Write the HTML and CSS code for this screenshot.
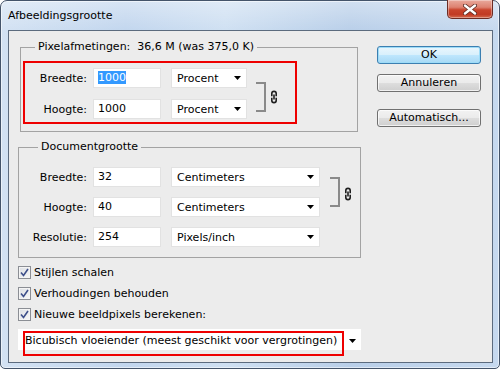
FILE: index.html
```html
<!DOCTYPE html>
<html>
<head>
<meta charset="utf-8">
<link rel="stylesheet" href="styles.css">
</head>
<body>
<div class="window">
  <div class="titlebar">
    <span class="title">Afbeeldingsgrootte</span>
    <div class="close">
      <svg width="14" height="11" viewBox="0 0 14 11"><path d="M2 1.5 L12 9.5 M12 1.5 L2 9.5" stroke="#5a2a22" stroke-width="4" stroke-linecap="round"/><path d="M2 1.5 L12 9.5 M12 1.5 L2 9.5" stroke="#fff" stroke-width="2.4" stroke-linecap="round"/></svg>
    </div>
  </div>
  <div class="client">
    <div class="main">
      <div class="group g1">
        <span class="legend">Pixelafmetingen: &nbsp;36,6 M (was 375,0 K)</span>
        <div class="redbox">
          <div class="rows">
            <div class="row">
              <span class="lbl">Breedte:</span>
              <span class="input"><span class="sel">1000</span></span>
              <span class="select s-short">Procent<svg class="arrow" width="7" height="4" viewBox="0 0 7 4"><path d="M0 0H7L3.5 4Z" fill="#000"/></svg></span>
            </div>
            <div class="row">
              <span class="lbl">Hoogte:</span>
              <span class="input">1000</span>
              <span class="select s-short">Procent<svg class="arrow" width="7" height="4" viewBox="0 0 7 4"><path d="M0 0H7L3.5 4Z" fill="#000"/></svg></span>
            </div>
          </div>
          <div class="bracket b1"></div>
          <svg class="chain" width="8" height="14" viewBox="0 0 8 14"><path d="M1.8 6.2V3.6a2.2 2.2 0 0 1 4.4 0V6.2M1.8 7.8v2.6a2.2 2.2 0 0 0 4.4 0V7.8M4 4.6v4.8" fill="none" stroke="#1e1e1e" stroke-width="1.6"/></svg>
        </div>
      </div>
      <div class="group g2">
        <span class="legend">Documentgrootte</span>
        <div class="linked">
          <div class="rows">
            <div class="row">
              <span class="lbl">Breedte:</span>
              <span class="input">32</span>
              <span class="select s-long">Centimeters<svg class="arrow" width="7" height="4" viewBox="0 0 7 4"><path d="M0 0H7L3.5 4Z" fill="#000"/></svg></span>
            </div>
            <div class="row">
              <span class="lbl">Hoogte:</span>
              <span class="input">40</span>
              <span class="select s-long">Centimeters<svg class="arrow" width="7" height="4" viewBox="0 0 7 4"><path d="M0 0H7L3.5 4Z" fill="#000"/></svg></span>
            </div>
          </div>
          <div class="bracket b2"></div>
          <svg class="chain" width="8" height="14" viewBox="0 0 8 14"><path d="M1.8 6.2V3.6a2.2 2.2 0 0 1 4.4 0V6.2M1.8 7.8v2.6a2.2 2.2 0 0 0 4.4 0V7.8M4 4.6v4.8" fill="none" stroke="#1e1e1e" stroke-width="1.6"/></svg>
        </div>
        <div class="row r3">
          <span class="lbl">Resolutie:</span>
          <span class="input">254</span>
          <span class="select s-long">Pixels/inch<svg class="arrow" width="7" height="4" viewBox="0 0 7 4"><path d="M0 0H7L3.5 4Z" fill="#000"/></svg></span>
        </div>
      </div>
      <div class="checks">
        <div class="check"><span class="box"><svg width="9" height="9" viewBox="0 0 9 9"><path d="M1 4.5L3.5 7.5L8 1" fill="none" stroke="#3d4f8a" stroke-width="1.6"/></svg></span>Stijlen schalen</div>
        <div class="check"><span class="box"><svg width="9" height="9" viewBox="0 0 9 9"><path d="M1 4.5L3.5 7.5L8 1" fill="none" stroke="#3d4f8a" stroke-width="1.6"/></svg></span>Verhoudingen behouden</div>
        <div class="check"><span class="box"><svg width="9" height="9" viewBox="0 0 9 9"><path d="M1 4.5L3.5 7.5L8 1" fill="none" stroke="#3d4f8a" stroke-width="1.6"/></svg></span>Nieuwe beeldpixels berekenen:</div>
      </div>
      <div class="dropdown">
        <span class="dd-text">Bicubisch vloeiender (meest geschikt voor vergrotingen)</span>
        <svg class="arrow" width="7" height="4" viewBox="0 0 7 4"><path d="M0 0H7L3.5 4Z" fill="#000"/></svg>
        <span class="mark"></span>
      </div>
    </div>
    <div class="btns">
      <div class="btn ok">OK</div>
      <div class="btn b-cancel">Annuleren</div>
      <div class="btn">Automatisch...</div>
    </div>
  </div>
</div>
</body>
</html>
```

FILE: styles.css
```css
* { box-sizing: border-box; }
html, body { margin: 0; padding: 0; }
body {
  width: 500px;
  height: 369px;
  overflow: hidden;
  background: #ffffff;
  font-family: "DejaVu Sans", sans-serif;
  font-size: 11px;
  color: #000;
}
.window {
  width: 500px;
  height: 369px;
  border: 1px solid #44546a;
  border-radius: 7px 7px 5px 5px;
  background:
    linear-gradient(180deg, rgba(255,255,255,0.35) 0, rgba(255,255,255,0) 30px),
    linear-gradient(90deg, #d3e2f3 0, #c2d6ee 25%, #cfe0f2 45%, #b9cfe9 70%, #c6d9ef 100%);
  box-shadow: inset 0 0 0 1px rgba(255,255,255,0.55);
  padding: 0 6px 5px 7px;
  display: flex;
  flex-direction: column;
}
.titlebar {
  height: 29px;
  display: flex;
  justify-content: space-between;
  align-items: flex-start;
}
.title {
  margin-top: 8px;
  line-height: 14px;
  font-size: 11px;
  color: #000;
}
.close {
  width: 46px;
  height: 19px;
  margin-top: -1px;
  border: 1px solid #6b2c24;
  border-top: none;
  border-radius: 0 0 5px 5px;
  background: linear-gradient(180deg, #e9a99c 0, #dd8270 40%, #c9442c 55%, #c13a23 80%, #d36a4e 100%);
  box-shadow: inset 0 0 0 1px rgba(255,255,255,0.35);
  display: flex;
  align-items: center;
  justify-content: center;
}
.client {
  height: 333px;
  border: 1px solid #5c6b7e;
  background: #ececec;
  display: flex;
}
.main {
  width: 352px;
  display: flex;
  flex-direction: column;
}
.group {
  border: 1px solid #a3a3a3;
  display: flex;
  flex-direction: column;
}
.legend {
  display: block;
  align-self: flex-start;
  line-height: 14px;
  margin-top: -8px;
  padding: 0 3px;
  background: #ececec;
  white-space: nowrap;
}
.g1 {
  margin: 16px 0 0 11px;
  width: 338px;
  height: 85px;
  padding-left: 2px;
}
.g1 .legend { margin-left: 12px; }
.redbox {
  margin-top: 7px;
  width: 274px;
  height: 63px;
  border: 2px solid #ee0000;
  padding-top: 5px;
  display: flex;
  align-items: center;
  align-self: flex-start;
}
.g1 .rows { align-self: flex-start; }
.rows {
  display: flex;
  flex-direction: column;
}
.g1 .row + .row { margin-top: 11px; }
.g1 .lbl { width: 62px; }
.row {
  display: flex;
  align-items: center;
  height: 20px;
}
.lbl {
  text-align: right;
  white-space: nowrap;
}
.input {
  margin-left: 6px;
  width: 68px;
  height: 20px;
  background: #fff;
  border: 1px solid #e2e2e2;
  padding-left: 4px;
  line-height: 18px;
}
.sel {
  background: #3399ff;
  color: #fff;
  display: inline-block;
  line-height: 13px;
}
.select {
  margin-left: 10px;
  height: 20px;
  background: #fff;
  border: 1px solid #e2e2e2;
  padding: 0 5px 0 5px;
  display: flex;
  align-items: center;
  justify-content: space-between;
}
.s-short { width: 76px; }
.s-long { width: 149px; }
.bracket {
  width: 10px;
  height: 30px;
  border: 2px solid #8a8a8a;
  border-left: none;
}
.b1 { margin-left: 9px; margin-top: 4px; }
.chain { margin-left: 4px; margin-top: 4px; }
.g2 {
  margin: 15px 0 0 9px;
  width: 343px;
  height: 111px;
}
.g2 .legend { margin-left: 19px; }
.g2 .lbl { width: 68px; }
.linked {
  margin-top: 13px;
  display: flex;
  align-items: center;
}
.g2 .row + .row { margin-top: 10px; }
.b2 { margin-left: 10px; }
.r3 { margin-top: 10px; }
.checks {
  margin: 4px 0 0 9px;
  display: flex;
  flex-direction: column;
}
.check {
  height: 21px;
  display: flex;
  align-items: center;
  white-space: nowrap;
}
.box {
  width: 13px;
  height: 13px;
  border: 1px solid #8b8e94;
  background: linear-gradient(135deg, #dcdfe4 0, #f7f7f7 100%);
  box-shadow: inset 0 0 0 1px #f4f4f4;
  margin-right: 3px;
  display: flex;
  align-items: center;
  justify-content: center;
}
.dropdown {
  position: relative;
  margin: 4px 0 0 9px;
  width: 343px;
  height: 21px;
  background: #fff;
  display: flex;
  align-items: center;
  justify-content: space-between;
  padding: 2px 5px 0 7px;
}
.mark {
  position: absolute;
  left: 5px;
  top: 2px;
  width: 321px;
  height: 25px;
  border: 2px solid #ee0000;
}
.btns {
  margin: 15px 0 0 16px;
  display: flex;
  flex-direction: column;
}
.btn {
  width: 104px;
  height: 18px;
  border: 1px solid #707070;
  border-radius: 3px;
  background: linear-gradient(180deg, #f2f2f2 0, #ebebeb 48%, #dddddd 52%, #cfcfcf 100%);
  box-shadow: inset 0 0 0 1px rgba(255,255,255,0.7);
  text-align: center;
  line-height: 16px;
}
.ok {
  border-color: #3c7fb1;
  background: linear-gradient(180deg, #eaf6fd 0, #d9f0fc 48%, #bee6fd 52%, #a7d9f5 100%);
  box-shadow: inset 0 0 0 1px #9ddcf8;
  margin-bottom: 10px;
}
.b-cancel { margin-bottom: 17px; }
```
